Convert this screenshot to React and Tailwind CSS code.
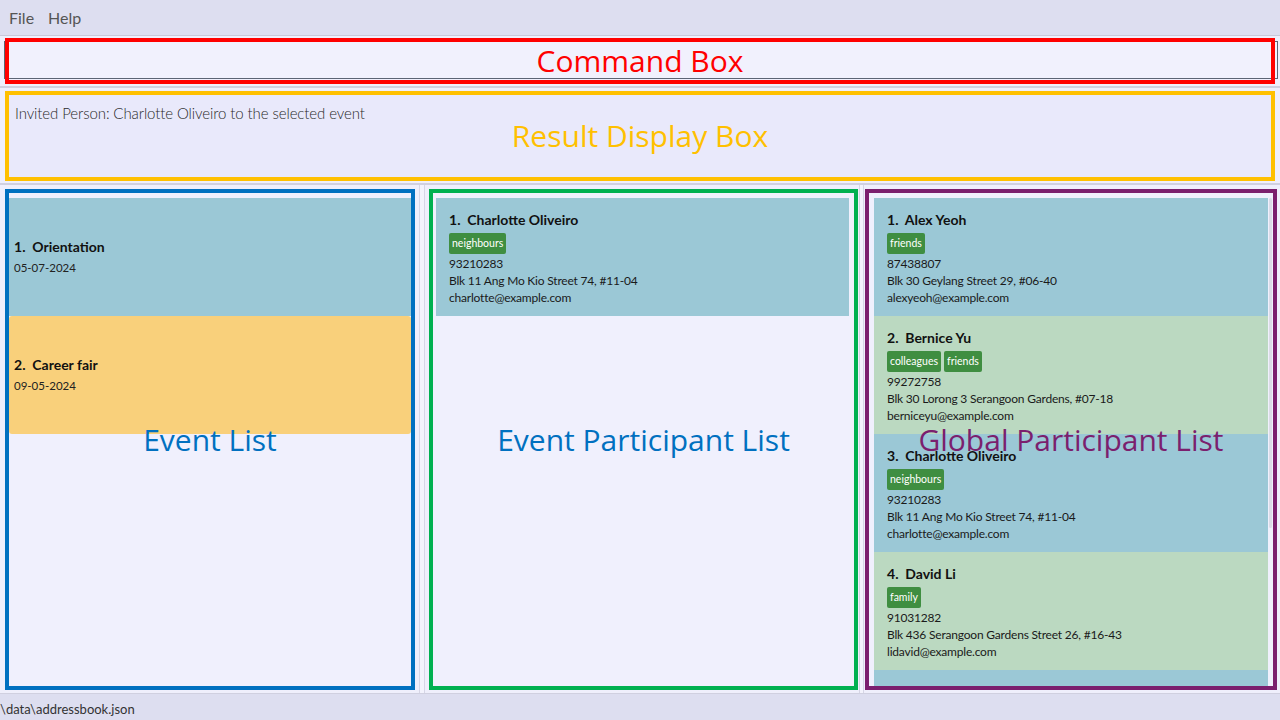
import React from 'react';

const events = [
  { name: 'Orientation', date: '05-07-2024', bg: 'bg-[#9bc8d6]' },
  { name: 'Career fair', date: '09-05-2024', bg: 'bg-[#f9d07b] rounded-[3px]' },
];

const people = [
  { name: 'Alex Yeoh', tags: ['friends'], phone: '87438807', address: 'Blk 30 Geylang Street 29, #06-40', email: 'alexyeoh@example.com' },
  { name: 'Bernice Yu', tags: ['colleagues', 'friends'], phone: '99272758', address: 'Blk 30 Lorong 3 Serangoon Gardens, #07-18', email: 'berniceyu@example.com' },
  { name: 'Charlotte Oliveiro', tags: ['neighbours'], phone: '93210283', address: 'Blk 11 Ang Mo Kio Street 74, #11-04', email: 'charlotte@example.com' },
  { name: 'David Li', tags: ['family'], phone: '91031282', address: 'Blk 436 Serangoon Gardens Street 26, #16-43', email: 'lidavid@example.com' },
  { name: 'Irfan Ibrahim', tags: ['classmates'], phone: '92492021', address: 'Blk 47 Tampines Street 20, #17-35', email: 'irfan@example.com' },
];

const uiFont = { fontFamily: 'Lato, "Noto Sans", sans-serif' };
const labelFont = { fontFamily: '"Open Sans", "Noto Sans", sans-serif' };

const PersonCard = ({ index, person, bg }) => (
  <div className={`h-[118px] shrink-0 pl-[13px] pt-[12px] ${bg}`}>
    <div className="text-[14px] font-bold leading-[20px] text-[#111]">
      {index}.&nbsp;&nbsp;{person.name}
    </div>
    <div className="mt-[3px] flex gap-[3px]">
      {person.tags.map((t) => (
        <span key={t} className="h-[21px] rounded-[2px] bg-[#3f8e41] px-[3px] text-[10.5px] leading-[21px] text-white">
          {t}
        </span>
      ))}
    </div>
    <div className="mt-[1px] text-[12px] leading-[17px] tracking-[-0.2px] text-[#1a1a1a]">
      <div>{person.phone}</div>
      <div>{person.address}</div>
      <div>{person.email}</div>
    </div>
  </div>
);

const Label = ({ text, color }) => (
  <div className="pointer-events-none absolute inset-0 flex items-center justify-center">
    <span className={`text-[30px] leading-none ${color}`} style={labelFont}>{text}</span>
  </div>
);

const App = () => {
  return (
    <div className="flex h-screen w-[1280px] flex-col overflow-hidden bg-[#efeffc]" style={uiFont}>
      {/* menu bar */}
      <div className="flex h-[36px] shrink-0 items-center gap-[14px] border-b border-[#c9c9da] bg-[#dddef0] pl-[9px] text-[16px] text-[#555]">
        <span>File</span>
        <span>Help</span>
      </div>

      {/* command box */}
      <div className="relative h-[52px] shrink-0 border-b-2 border-[#d0d0e0] px-[4px] pt-[5px]">
        <div className="h-[38px] w-[1274px] border border-[#5c6474] bg-[#f1f1fd]" />
        <div className="absolute left-[5px] top-[2px] h-[46px] w-[1270px] border-4 border-[#ff0000]">
          <Label text="Command Box" color="text-[#ff0000]" />
        </div>
      </div>

      {/* result display */}
      <div className="h-[97px] shrink-0 border-b-2 border-[#d0d0e0] px-[5px] pt-[3px]">
        <div className="relative h-[90px] w-[1270px] border-4 border-[#ffc000] bg-[#e9e9fb] px-[6px] pt-[7px]">
          <div className="text-[15px] font-light tracking-[-0.1px] text-[#2a2a2a]">
            Invited Person: Charlotte Oliveiro to the selected event
          </div>
          <Label text="Result Display Box" color="text-[#ffc000]" />
        </div>
      </div>

      {/* lists */}
      <div className="flex h-[508px] shrink-0 pt-[4px]">
        <div className="ml-[5px] w-[410px]">
          <div className="relative h-[501px] border-4 border-[#0070c0] bg-[#f0f0fd] pt-[5px]">
            <div className="flex flex-col">
              {events.map((e, i) => (
                <div key={e.name} className={`flex h-[118px] flex-col justify-center pl-[5px] ${e.bg}`}>
                  <div className="text-[14px] font-bold leading-[20px] text-[#111]">
                    {i + 1}.&nbsp;&nbsp;{e.name}
                  </div>
                  <div className="mt-[2px] text-[11.5px] leading-[18px] text-[#222]">{e.date}</div>
                </div>
              ))}
            </div>
            <Label text="Event List" color="text-[#0070c0]" />
          </div>
        </div>

        <div className="mx-[4px] mt-[-4px] w-[6px] border-x border-[#d6d6e6] bg-[#f3f3fd]" />

        <div className="w-[429px]">
          <div className="relative h-[501px] border-4 border-[#00b050] bg-[#f0f0fd] pl-[3px] pr-[5px] pt-[5px]">
            <PersonCard index={1} person={people[2]} bg="bg-[#9bc8d6]" />
            <Label text="Event Participant List" color="text-[#0070c0]" />
          </div>
        </div>

        <div className="mx-[1px] mt-[-4px] w-[5px] border-x border-[#d6d6e6] bg-[#f3f3fd]" />

        <div className="w-[412px]">
          <div className="relative h-[501px] overflow-hidden border-4 border-[#7b1f6e] bg-[#f0f0fd] pl-[5px] pr-[5px] pt-[5px]">
            <div className="flex h-full flex-col overflow-hidden">
              {people.map((p, i) => (
                <PersonCard key={p.name} index={i + 1} person={p} bg={i % 2 === 0 ? 'bg-[#9bc8d6]' : 'bg-[#bbd9c1]'} />
              ))}
            </div>
            <div className="absolute right-[1px] top-[5px] h-[330px] w-[3px] rounded bg-[#dcdce8]" />
            <Label text="Global Participant List" color="text-[#7b1f6e]" />
          </div>
        </div>
      </div>

      {/* status bar */}
      <div className="flex flex-1 items-end border-t border-[#d0d0e0] bg-[#dddef0] pb-[1px] text-[13px] text-[#333]">
        \data\addressbook.json
      </div>
    </div>
  );
};

export default App;
